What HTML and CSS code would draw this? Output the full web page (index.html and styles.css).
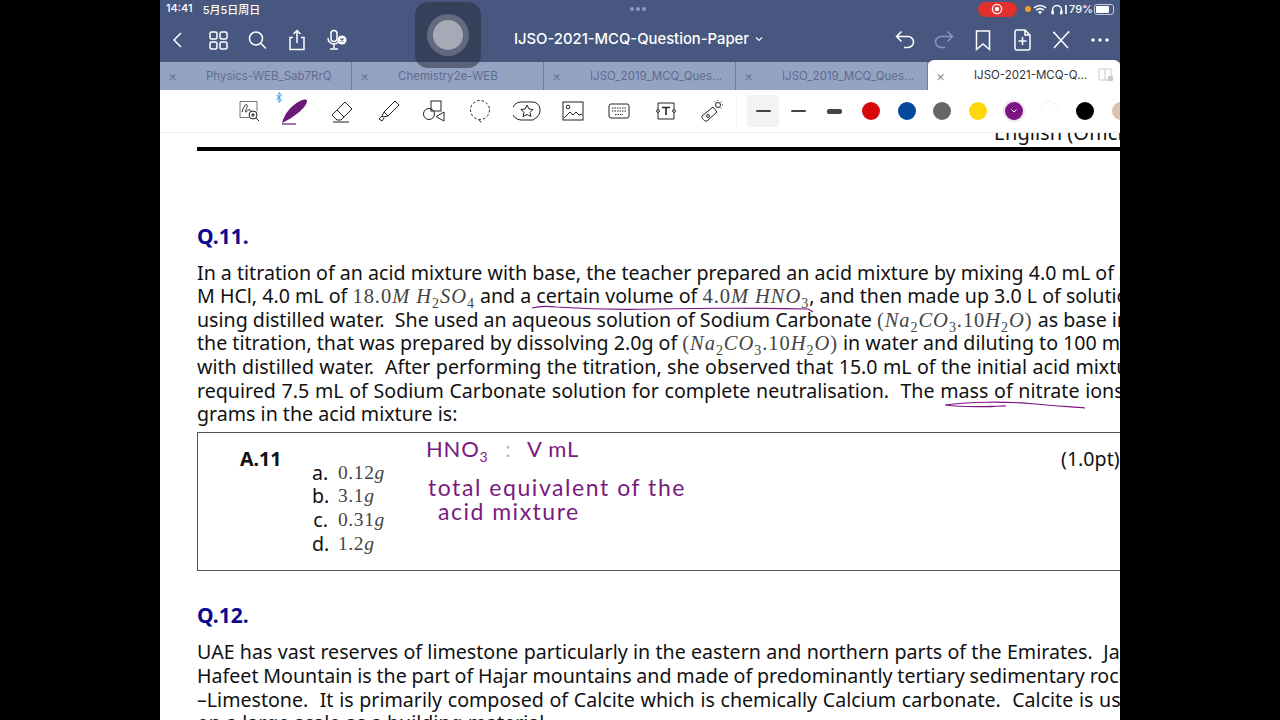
FILE: index.html
```html
<!DOCTYPE html>
<html lang="en">
<head>
  <meta charset="UTF-8" />
  <title>IJSO-2021-MCQ-Question-Paper</title>
  <link rel="stylesheet" href="styles.css">
</head>
<body>
  <div class="screen">
    <div class="appbar">
      <div class="status">
        <div class="status-left"><span>14:41</span><span>5月5日周日</span></div>
        <div class="status-dots"><i></i><i></i><i></i></div>
        <div class="status-right">
          <span class="rec"><svg width="12" height="12" viewBox="0 0 12 12"><circle cx="6" cy="6" r="4.6" fill="none" stroke="#fff" stroke-width="1.3"/><circle cx="6" cy="6" r="2.2" fill="#fff"/></svg></span>
          <span class="orange"></span>
          <svg class="wifi" width="14" height="11" viewBox="0 0 14 11"><path d="M1 4a8.5 8.5 0 0 1 12 0M3.2 6.2a5.4 5.4 0 0 1 7.6 0" fill="none" stroke="#fff" stroke-width="1.6"/><path d="M5 8a2.8 2.8 0 0 1 4 0l-2 2.2z" fill="#fff"/></svg>
          <svg class="phones" width="13" height="11" viewBox="0 0 13 11"><path d="M1.5 9V6a4.5 4.5 0 0 1 9 0v3" fill="none" stroke="#fff" stroke-width="1.5"/><rect x="0.5" y="6.5" width="2.5" height="4" rx="1" fill="#fff"/><rect x="9" y="6.5" width="2.5" height="4" rx="1" fill="#fff"/></svg>
          <span class="bars"></span>
          <span class="pct">79%</span>
          <span class="battery"><b></b></span>
        </div>
      </div>
      <div class="navrow">
        <div class="nav-group nav-left">
          <svg class="nav-ico" viewBox="0 0 24 24"><path d="M15 5l-7 7 7 7"/></svg>
          <svg class="nav-ico" viewBox="0 0 24 24"><rect x="4" y="4" width="7" height="7" rx="1.5"/><rect x="14" y="4" width="7" height="7" rx="1.5"/><rect x="4" y="14" width="7" height="7" rx="1.5"/><rect x="14" y="14" width="7" height="7" rx="1.5"/></svg>
          <svg class="nav-ico" viewBox="0 0 24 24"><circle cx="11" cy="10.5" r="6.5"/><path d="M16 15.5l5 5"/></svg>
          <svg class="nav-ico" viewBox="0 0 24 24"><path d="M8 9.5H5v12h14v-12h-3M12 15V3M8.5 6L12 2.5 15.5 6"/></svg>
          <svg class="nav-ico" viewBox="0 0 24 24"><rect x="7" y="2.5" width="6" height="11" rx="3"/><path d="M4 10a6 6 0 0 0 12 0M10 16v4M6 21h8"/><circle cx="18" cy="12" r="4.5" fill="#fff" stroke="none"/><path d="M16.5 10.5l3 3M19.5 10.5l-3 3" stroke="#475780" stroke-width="1.2"/></svg>
        </div>
        <div class="doc-title">IJSO-2021-MCQ-Question-Paper <svg width="8" height="6" viewBox="0 0 8 6"><path d="M1 1.5l3 3 3-3" fill="none" stroke="#fff" stroke-width="1.1"/></svg></div>
        <div class="nav-group nav-right">
          <svg class="nav-ico" viewBox="0 0 24 24"><path d="M8.5 3.5L3.5 8.5l5 5M3.5 8.5H15a5.5 5.5 0 0 1 0 11h-4"/></svg>
          <svg class="nav-ico dim" viewBox="0 0 24 24"><path d="M15.5 3.5l5 5-5 5M20.5 8.5H9a5.5 5.5 0 0 0 0 11h4"/></svg>
          <svg class="nav-ico" viewBox="0 0 24 24"><path d="M5.5 3h13v18.5L12 16l-6.5 5.5z"/></svg>
          <svg class="nav-ico" viewBox="0 0 24 24"><path d="M5 4a2 2 0 0 1 2-2h8l5 5v13a2 2 0 0 1-2 2H7a2 2 0 0 1-2-2zM15 2v5h5M12.5 9v8M8.5 13h8"/></svg>
          <svg class="nav-ico" viewBox="0 0 24 24"><path d="M5 4.500l14 15.500M19.5 4L5 20M4 4.500h2M18.500 4h2"/></svg>
          <svg class="nav-ico" viewBox="0 0 24 24"><circle cx="5" cy="12" r="1.7" fill="#fff" stroke="none"/><circle cx="12" cy="12" r="1.7" fill="#fff" stroke="none"/><circle cx="19" cy="12" r="1.7" fill="#fff" stroke="none"/></svg>
        </div>
      </div>
      <div class="tabs">
        <div class="tab"><span class="tab-x">×</span><span class="tab-name">Physics-WEB_Sab7RrQ</span></div>
        <div class="tab"><span class="tab-x">×</span><span class="tab-name">Chemistry2e-WEB</span></div>
        <div class="tab"><span class="tab-x">×</span><span class="tab-name">IJSO_2019_MCQ_Ques...</span></div>
        <div class="tab"><span class="tab-x">×</span><span class="tab-name">IJSO_2019_MCQ_Ques...</span></div>
        <div class="tab active"><span class="tab-x">×</span><span class="tab-name">IJSO-2021-MCQ-Q...</span>
          <svg class="tab-split" width="16" height="14" viewBox="0 0 16 14"><path d="M1 1h12v11H1zM7 1v11" fill="none" stroke="#c9c9c9"/><rect x="10" y="8" width="5" height="5" rx="1" fill="#c9c9c9"/></svg>
        </div>
      </div>
    </div>

    <div class="toolbar">
      <div class="tools">
        <svg class="tool" viewBox="0 0 24 24"><path d="M3 2.5h17v10M3 2.5v16h9" stroke="#777"/><path d="M5 13c2-6 4-9 5-7s-3 8-1 7 3-4 4-2 1 2 2 1"/><circle cx="16" cy="16" r="4"/><path d="M19 19l3 3M14 16h4M16 14v4"/></svg>
        <span class="pen-wrap">
          <svg class="bt" width="6" height="11" viewBox="0 0 6 11"><path d="M.5 3l5 5L3 10.500V.5L5.500 3l-5 5" fill="none" stroke="#2b95ea" stroke-width="1"/></svg>
          <svg class="tool pen" viewBox="0 0 30 30"><path d="M2 27c2-8 8-17 18-22 4-2 7-2 7 0 0 3-4 8-9 12-5 4-10 7-16 10z" fill="#6b1a78" stroke="none"/><path d="M2 28h14" stroke="#6b1a78"/></svg>
        </span>
        <svg class="tool" viewBox="0 0 24 24"><path d="M2 16L15 3l7 7-11 11H7z"/><path d="M7 11l7 7M3 23h16"/></svg>
        <svg class="tool" viewBox="0 0 24 24"><path d="M8 13L19 2l4 4-11 11zM8 13l-2 4 1 1 5-1M6 17l-3 3 3 2 2-3"/></svg>
        <svg class="tool" viewBox="0 0 24 24"><rect x="9" y="2" width="10" height="10"/><circle cx="7" cy="15" r="5.5"/><path d="M22 13v9l-8-4.500z"/></svg>
        <svg class="tool" viewBox="0 0 24 24"><circle cx="12" cy="11" r="9.5" stroke-dasharray="2.600 2"/><path d="M11 20.500l2 3"/></svg>
        <svg class="tool wide" viewBox="0 0 28 24"><path d="M8 3h12a7.500 7.500 0 0 1 7 8c0 3-1 5-3 7l-4 3H8a8 8 0 0 1 0-18z"/><path d="M14 6l2 4 4 .5-3 3 1 4-4-2-4 2 1-4-3-3 4-.5z"/></svg>
        <svg class="tool" viewBox="0 0 24 24"><rect x="2" y="3" width="20" height="18"/><circle cx="7" cy="8" r="1.8"/><path d="M3 19l6-6 3 3 3-3 3 3 3-1"/></svg>
        <svg class="tool" viewBox="0 0 24 24"><rect x="2" y="5" width="20" height="14" rx="2"/><path d="M5 9h14M5 12h14M8 15.500h8" stroke-dasharray="1.500 1"/></svg>
        <svg class="tool" viewBox="0 0 24 24"><path d="M4 4h16v16H4z"/><path d="M8 8.500h8M12 8.500V16" stroke-width="1.6"/><circle cx="4" cy="12" r="1.400" fill="#fff"/><circle cx="20" cy="12" r="1.400" fill="#fff"/></svg>
        <svg class="tool" viewBox="0 0 24 24"><path d="M2 17L13 8l4 5-10 9c-2 1-6-3-5-5z"/><circle cx="8" cy="17" r="1.5"/><circle cx="18" cy="6" r="2.5"/><path d="M18 1v1M23 6h-1M21.500 2.500l-1 1M14.500 2.500l1 1M21.500 9.500l-1-1" stroke-width="0.9"/></svg>
      </div>
      <div class="thickness">
        <div class="stroke selected"><i class="w1"></i></div>
        <div class="stroke"><i class="w2"></i></div>
        <div class="stroke"><i class="w3"></i></div>
      </div>
      <div class="swatches">
        <span class="swatch red"></span>
        <span class="swatch blue"></span>
        <span class="swatch grey"></span>
        <span class="swatch yellow"></span>
        <span class="swatch purple"><svg width="8" height="6" viewBox="0 0 8 6"><path d="M1.500 1.500L4 4l2.500-2.500" fill="none" stroke="#fff" stroke-width="1"/></svg></span>
        <span class="swatch white"></span>
        <span class="swatch black"></span>
        <span class="swatch tan"></span>
      </div>
    </div>

    <div class="doc">
      <div class="doc-lang">English (Official)</div>
      <div class="question q11">Q.11.</div>
      <div class="para">
        <div class="ln">In a titration of an acid mixture with base, the teacher prepared an acid mixture by mixing 4.0 mL of 3.0</div>
        <div class="ln">M HCl, 4.0 mL of <span class="m">18.0<i>M H</i><sub>2</sub><i>SO</i><sub>4</sub></span> and a certain volume of <span class="m">4.0<i>M HNO</i><sub>3</sub></span>, and then made up 3.0 L of solution</div>
        <div class="ln">using distilled water.&nbsp; She used an aqueous solution of Sodium Carbonate <span class="m">(<i>Na</i><sub>2</sub><i>CO</i><sub>3</sub>.10<i>H</i><sub>2</sub><i>O</i>)</span> as base in</div>
        <div class="ln">the titration, that was prepared by dissolving 2.0g of <span class="m">(<i>Na</i><sub>2</sub><i>CO</i><sub>3</sub>.10<i>H</i><sub>2</sub><i>O</i>)</span> in water and diluting to 100 mL</div>
        <div class="ln loose-a">with distilled water.&nbsp; After performing the titration, she observed that 15.0 mL of the initial acid mixture</div>
        <div class="ln loose-b">required 7.5 mL of Sodium Carbonate solution for complete neutralisation.&nbsp; The mass of nitrate ions in</div>
        <div class="ln">grams in the acid mixture is:</div>
      </div>
      <div class="answer">
        <div class="answer-id">A.11</div>
        <div class="options">
          <span class="opt">a.</span><span class="m">0.12<i>g</i></span>
          <span class="opt">b.</span><span class="m">3.1<i>g</i></span>
          <span class="opt">c.</span><span class="m">0.31<i>g</i></span>
          <span class="opt">d.</span><span class="m">1.2<i>g</i></span>
        </div>
        <div class="points">(1.0pt)</div>
      </div>
      <div class="question q12">Q.12.</div>
      <div class="para">
        <div class="ln loose-c">UAE has vast reserves of limestone particularly in the eastern and northern parts of the Emirates.&nbsp; Jabal</div>
        <div class="ln tight-a">Hafeet Mountain is the part of Hajar mountains and made of predominantly tertiary sedimentary rock</div>
        <div class="ln loose-b">–Limestone.&nbsp; It is primarily composed of Calcite which is chemically Calcium carbonate.&nbsp; Calcite is used</div>
        <div class="ln">on a large scale as a building material.</div>
      </div>
    </div>

    <svg class="ink-lines" width="960" height="720" viewBox="160 0 960 720">
      <path d="M532 308c8-2 14-2 24-1 30 2 60 3 100 2 50-1 100-1 152 0l5 3"/>
      <path d="M945 405c20-3 60-4 90-1 20 2 40 3 50 4M945 405c25 3 45 1 60 1M990 407c6-1 10-1 16-1"/>
    </svg>
    <div class="ink ink-a">HNO<sub>3</sub> <span class="ink-colon">:</span> V mL</div>
    <div class="ink ink-b">total equivalent of the</div>
    <div class="ink ink-c">acid mixture</div>

    <div class="touch"><span class="touch-ring"><span class="touch-dot"></span></span></div>
  </div>
</body>
</html>
```
FILE: styles.css
```css
html, body {
  margin: 0;
  padding: 0;
  height: 100%;
  background: #000;
  overflow: hidden;
}

.screen {
  position: relative;
  width: 960px;
  height: 720px;
  margin: 0 auto;
  background: #fff;
  overflow: hidden;
  font-family: 'Noto Sans', sans-serif;
}

/* top bar */
.appbar {
  height: 90px;
  background: #475780;
  color: #fff;
  font-family: Inter, 'Noto Sans CJK SC', sans-serif;
}

.status {
  height: 18px;
  display: flex;
  align-items: center;
  justify-content: space-between;
  padding: 0 6px 0 6px;
  font-size: 11px;
  font-weight: 500;
  position: relative;
}

.status-left {
  display: flex;
  gap: 10px;
}

.status-dots {
  position: absolute;
  left: 470px;
  top: 7px;
  display: flex;
  gap: 2px;
}

.status-dots i {
  width: 4px;
  height: 4px;
  border-radius: 50%;
  background: #8d9bc0;
}

.status-right {
  display: flex;
  align-items: center;
  gap: 3px;
}

.rec {
  width: 39px;
  height: 15px;
  border-radius: 8px;
  background: #e2312d;
  display: flex;
  align-items: center;
  justify-content: center;
  margin-right: 5px;
}

.orange {
  width: 6px;
  height: 6px;
  border-radius: 50%;
  background: #f59a23;
  margin-right: -1px;
}

.wifi {
  margin-right: 1px;
}

.phones {
  margin-right: -2px;
}

.bars {
  width: 2px;
  height: 9px;
  background: #d5d9e5;
}

.pct {
  font-size: 11px;
  margin-left: -1px;
}

.battery {
  display: block;
  width: 16px;
  height: 7px;
  margin-left: -2px;
  border: 1px solid #c6cbdb;
  border-radius: 3px;
  padding: 1px;
}

.battery b {
  display: block;
  width: 79%;
  height: 100%;
  background: #fff;
  border-radius: 1px;
}

.navrow {
  height: 44px;
  display: flex;
  align-items: center;
  justify-content: space-between;
  position: relative;
  padding: 0 8px 0 6px;
}

.nav-group {
  display: flex;
  align-items: center;
  gap: 15.5px;
}

.nav-right {
  gap: 15px;
}

.nav-ico {
  width: 24px;
  height: 24px;
  fill: none;
  stroke: #fff;
  stroke-width: 1.5;
}

.nav-ico.dim {
  stroke: #8696bd;
}

.doc-title {
  position: absolute;
  left: 354px;
  top: 12px;
  font-size: 14.8px;
  font-weight: 500;
  white-space: nowrap;
}

.doc-title svg {
  margin-left: 2px;
  vertical-align: 2px;
}

.tabs {
  display: flex;
  height: 28px;
  background: #95a3c2;
}

.tab {
  position: relative;
  width: 192px;
  box-sizing: border-box;
  padding-left: 46px;
  border-right: 1px solid #6f7fa5;
  display: flex;
  align-items: center;
  font-size: 11.5px;
  color: #5f6c90;
}

.tab-x {
  position: absolute;
  left: 8px;
  top: 5px;
  font-size: 14px;
  line-height: 18px;
  font-weight: 300;
}

.tab.active {
  height: 30px;
  margin-top: -2px;
  background: #fff;
  color: #333;
  border: 0;
  border-radius: 6px 6px 0 0;
}

.tab.active .tab-x {
  color: #777;
  top: 7px;
}

.tab-split {
  position: absolute;
  right: 6px;
  top: 8px;
}

/* pen toolbar */
.toolbar {
  position: relative;
  height: 43px;
  background: #fff;
  border-bottom: 1px solid #eceef1;
  box-sizing: border-box;
  display: flex;
  align-items: center;
  padding-left: 77px;
}

.tools {
  display: flex;
  align-items: center;
  width: 499px;
}

.tool {
  width: 24px;
  height: 24px;
  margin-right: 22.3px;
  fill: none;
  stroke: #222;
  stroke-width: 1;
  flex: none;
}

.pen-wrap {
  position: relative;
  display: flex;
  margin: 0 19.3px 0 -3px;
}

.bt {
  position: absolute;
  left: -4px;
  top: -4px;
}

.tool.pen {
  width: 30px;
  height: 30px;
  margin: 0;
  stroke-width: 1.2;
}

.tool.wide {
  width: 28px;
  margin: 0 20.3px 0 -2px;
}

.thickness {
  display: flex;
  align-items: center;
  padding-left: 10px;
  border-left: 1px solid #f2f3f5;
}

.stroke {
  width: 32px;
  height: 32px;
  margin-right: 3.5px;
  border-radius: 3px;
  display: flex;
  align-items: center;
  justify-content: center;
}

.stroke.selected {
  background: #f2f3f5;
}

.stroke i {
  width: 15px;
  background: #444;
  border-radius: 2px;
}

.w1 { height: 1.5px; }
.w2 { height: 2.5px; }
.w3 { height: 5px; }

.swatches {
  display: flex;
  align-items: center;
  gap: 17.7px;
  margin-left: 8.5px;
}

.swatch {
  width: 18px;
  height: 18px;
  border-radius: 50%;
  flex: none;
  display: flex;
  align-items: center;
  justify-content: center;
}

.red { background: #d60a0a; }
.blue { background: #03489b; }
.grey { background: #666; }
.yellow { background: #ffd60a; }
.purple { background: #7d1585; box-shadow: 0 0 0 2px #eee6f0; }
.white { background: #fff; box-shadow: 0 -1px 1px #eee; }
.black { background: #000; }
.tan { background: #d9c2b0; }

/* pdf page */
.doc {
  height: 587px;
  overflow: hidden;
  padding-left: 37px;
  color: #111;
  font-size: 19.63px;
  line-height: 23.6px;
  white-space: nowrap;
}

.doc-lang {
  height: 14px;
  margin-right: -100px;
  padding-left: 797px;
  line-height: 0;
  border-bottom: 4px solid #000;
  font-size: 20px;
}

.question {
  font-weight: 700;
  font-size: 21px;
  color: #0a0a8c;
}

.q11 { margin-top: 74px; margin-bottom: 12px; }
.q12 { margin-top: 33px; margin-bottom: 13px; }

.para .ln {
  height: 23.6px;
}

/* the pdf justifies its lines, so word gaps differ a little */
.loose-a { word-spacing: 0.3px; }
.loose-b { word-spacing: 0.6px; }
.loose-c { word-spacing: 0.2px; }
.tight-a { word-spacing: -0.3px; }

.m {
  font-family: 'Liberation Serif', serif;
  color: #444;
  font-size: 20.5px;
  letter-spacing: 0.95px;
}

.m sub {
  font-size: 14px;
  line-height: 0;
}

.answer {
  position: relative;
  height: 139px;
  margin: 6px -20px 0 0;
  box-sizing: border-box;
  border: 1px solid #555;
  display: flex;
  padding: 14px 0 0 42px;
}

.answer-id {
  width: 72px;
  font-weight: 700;
}

.options {
  display: grid;
  grid-template-columns: 16px auto;
  column-gap: 10px;
  margin-top: 14px;
  align-content: start;
}

.options .m {
  font-size: 19.5px;
  letter-spacing: 0.6px;
}

.opt {
  text-align: right;
}

.points {
  position: absolute;
  left: 863px;
  top: 14px;
}

/* ink written on the page */
.ink-lines {
  position: absolute;
  left: 0;
  top: 0;
  fill: none;
  stroke: #7d1585;
  stroke-width: 1.2;
}

.ink {
  position: absolute;
  color: #7a1a80;
  font-family: Lato, sans-serif;
  font-weight: 400;
  white-space: nowrap;
}

.ink-a { left: 266px; top: 435px; font-size: 22px; letter-spacing: 0.8px; }
.ink-a sub { font-size: 14px; line-height: 0; }
.ink-colon { margin: 0 10px; color: #bbb; }
.ink-b { left: 268px; top: 473px; font-size: 23px; letter-spacing: 1.55px; }
.ink-c { left: 278px; top: 497px; font-size: 23px; letter-spacing: 1.5px; }

/* assistive touch button */
.touch {
  position: absolute;
  left: 255px;
  top: 2px;
  width: 66px;
  height: 66px;
  border-radius: 13px;
  background: rgba(40, 45, 60, 0.55);
  display: flex;
  align-items: center;
  justify-content: center;
}

.touch-ring {
  width: 42px;
  height: 42px;
  border-radius: 50%;
  background: rgba(255, 255, 255, 0.22);
  display: flex;
  align-items: center;
  justify-content: center;
}

.touch-dot {
  width: 30px;
  height: 30px;
  border-radius: 50%;
  background: #a6aab7;
}
```
